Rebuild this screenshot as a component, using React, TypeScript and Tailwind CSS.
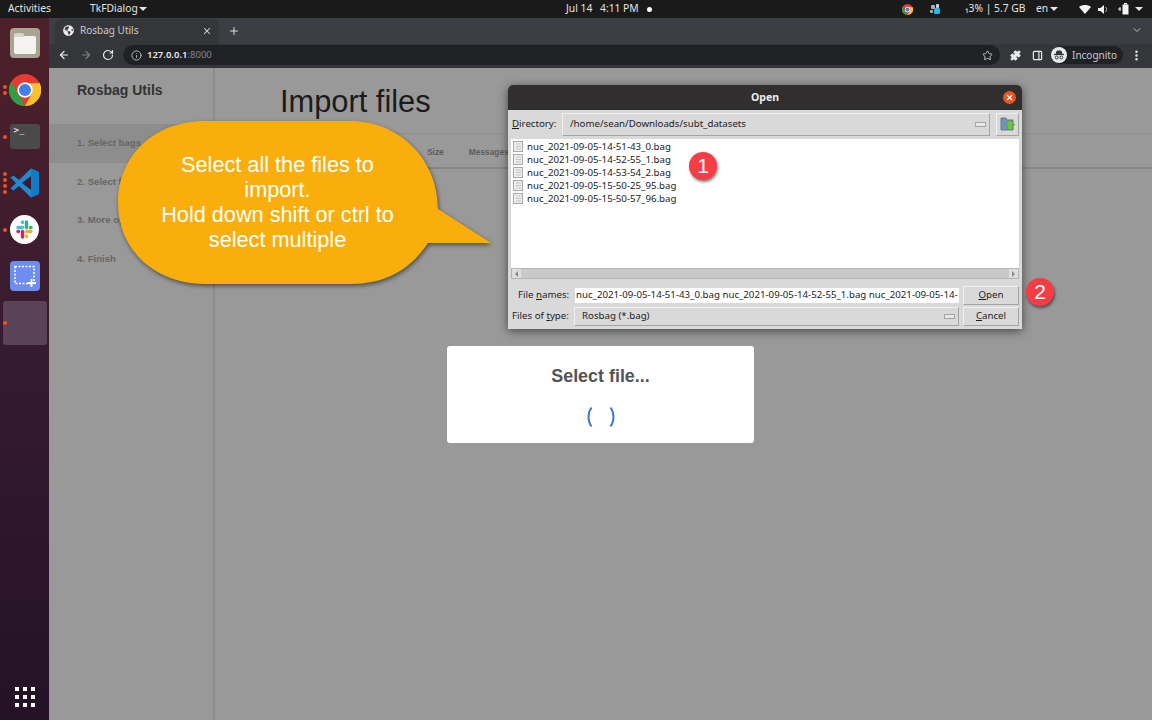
import React from 'react';
import {
  ArrowLeft,
  ArrowRight,
  ChevronDown,
  Info,
  MoreVertical,
  PanelRight,
  Plus,
  Puzzle,
  RotateCw,
  Star,
  X,
} from 'lucide-react';
import { FaGlobeAmericas } from 'react-icons/fa';

const files = [
  'nuc_2021-09-05-14-51-43_0.bag',
  'nuc_2021-09-05-14-52-55_1.bag',
  'nuc_2021-09-05-14-53-54_2.bag',
  'nuc_2021-09-05-15-50-25_95.bag',
  'nuc_2021-09-05-15-50-57_96.bag',
];

const steps = ['1. Select bags', '2. Select fields', '3. More options', '4. Finish'];

function Caret() {
  return <span className="inline-block h-0 w-0 border-x-[4px] border-t-[4px] border-x-transparent border-t-[#e6e6e6]" />;
}

function ChromeLogo({ size }: { size: number }) {
  return (
    <svg width={size} height={size} viewBox="0 0 48 48">
      <circle cx="24" cy="24" r="24" fill="#e53b30" />
      <path d="M24 48 A24 24 0 0 1 3.2 12 L14 30 Z" fill="#2f9e48" />
      <path d="M45 12 A24 24 0 0 1 24 48 L34 30 L24 14 H45 Z" fill="#fbc02d" />
      <circle cx="24" cy="24" r="11.5" fill="#fff" />
      <circle cx="24" cy="24" r="9" fill="#3f7fe8" />
    </svg>
  );
}

function VSCodeLogo() {
  return (
    <svg width="30" height="30" viewBox="0 0 30 30">
      <path d="M21 0.5 L29 4 V26 L21 29.5 L9 18 L3.5 22.5 L0.5 20.5 L6 15 L0.5 9.5 L3.5 7.5 L9 12 Z" fill="#1f8ad2" />
      <path d="M21 0.5 L29 4 V26 L21 29.5 Z" fill="#0f7cc4" />
      <path d="M21 8 L12 15 L21 22 Z" fill="#3d1a2e" />
    </svg>
  );
}

function SlackLogo() {
  return (
    <svg width="29" height="29" viewBox="0 0 29 29">
      <circle cx="14.5" cy="14.5" r="14.5" fill="#fff" />
      <g strokeWidth="3.4" strokeLinecap="round" fill="none">
        <path d="M12.5 12.5 H8" stroke="#36c5f0" />
        <path d="M12.5 7 V7.5" stroke="#36c5f0" />
        <path d="M16.5 7 V12.5" stroke="#2eb67d" />
        <path d="M21 12.5 H20.5" stroke="#2eb67d" />
        <path d="M16.5 16.5 H21" stroke="#ecb22e" />
        <path d="M16.5 21.5 V21" stroke="#ecb22e" />
        <path d="M12.5 16.5 V22" stroke="#e01e5a" />
        <path d="M8 16.5 H8.5" stroke="#e01e5a" />
      </g>
    </svg>
  );
}

function Dots({ count }: { count: number }) {
  return (
    <div className="absolute left-[3px] top-1/2 flex -translate-y-1/2 flex-col gap-[2px]">
      {Array.from({ length: count }).map((_, i) => (
        <span key={i} className="h-1 w-1 rounded-full bg-[#e9541f]" />
      ))}
    </div>
  );
}

function Dock() {
  return (
    <div className="relative flex w-[49px] shrink-0 flex-col items-center bg-gradient-to-b from-[#4e2029] via-[#351a30] to-[#241226] pt-[10px]">
      {/* Files */}
      <div className="flex h-[30px] w-[30px] items-center justify-center rounded-[4px] bg-[#a8a393]">
        <div className="relative mt-[3px] h-[18px] w-[22px] rounded-[2px] bg-[#f4f3ef]">
          <div className="absolute -top-[3px] left-0 h-[4px] w-[10px] rounded-t-[2px] bg-[#d8d5cb]" />
        </div>
      </div>
      {/* Chrome */}
      <div className="relative mt-[16px] flex h-[32px] w-full items-center justify-center">
        <Dots count={2} />
        <ChromeLogo size={32} />
      </div>
      {/* Terminal */}
      <div className="relative mt-[18px] flex h-[25px] w-full justify-center">
        <Dots count={1} />
        <div className="h-[25px] w-[30px] rounded-[3px] bg-[#4a4a4a] px-[4px] font-['DejaVu_Sans_Mono',monospace] text-[9px] leading-[12px] text-white">
          &gt;_
        </div>
      </div>
      {/* VS Code */}
      <div className="relative mt-[19px] flex h-[30px] w-full items-center justify-center">
        <Dots count={4} />
        <VSCodeLogo />
      </div>
      {/* Slack */}
      <div className="relative mt-[17px] flex h-[29px] w-full items-center justify-center">
        <Dots count={1} />
        <SlackLogo />
      </div>
      {/* Screenshot */}
      <div className="mt-[17px] flex h-[30px] w-[30px] items-center justify-center rounded-[4px] bg-[#6f8df0]">
        <svg width="24" height="24" viewBox="0 0 24 24" fill="none" stroke="#fff">
          <rect x="2" y="2.5" width="19" height="17" strokeWidth="1.6" strokeDasharray="2 1.5" />
          <path d="M18.5 15 V23 M14.5 19 H23" strokeWidth="1.8" />
        </svg>
      </div>
      {/* Active app */}
      <div className="relative mt-[10px] h-[44px] w-[44px] rounded-[3px] bg-[#5a4257]">
        <span className="absolute left-0 top-[20px] h-1 w-1 rounded-full bg-[#e9541f]" />
      </div>
      {/* App grid */}
      <div className="mt-auto mb-[13px] grid grid-cols-3 gap-[4px]">
        {Array.from({ length: 9 }).map((_, i) => (
          <span key={i} className="h-[4px] w-[4px] bg-white" />
        ))}
      </div>
    </div>
  );
}

function TopBar() {
  return (
    <div className="flex h-[18px] shrink-0 items-center whitespace-nowrap bg-[#1a1a1a] font-['Noto_Sans',sans-serif] text-[10.3px] text-[#e4e4e4]">
      <span className="ml-[8px] w-[43px]">Activities</span>
      <span className="ml-[39px] w-[45px]">TkFDialog</span>
      <span className="ml-[4px] flex w-[8px]"><Caret /></span>
      <span className="ml-[419px] w-[27px]">Jul 14</span>
      <span className="ml-[7px] w-[35px]">4:11 PM</span>
      <span className="ml-[12px] h-[5px] w-[5px] rounded-full bg-white" />
      <div className="ml-[250px] flex w-[11px]"><ChromeLogo size={11} /></div>
      <svg className="ml-[17px]" width="11" height="11" viewBox="0 0 11 11">
        <rect x="1" y="1" width="4" height="4" rx="1" fill="#9fb4b8" />
        <rect x="6" y="0" width="3" height="4" rx="1" fill="#c9d5d8" />
        <rect x="4" y="4" width="6" height="6" rx="1.5" fill="#2fb5e8" />
        <rect x="0" y="6" width="3" height="3" rx="1" fill="#9fb4b8" />
      </svg>
      <span className="ml-[24px] w-[55px]">₁3% | 5.7 GB</span>
      <span className="ml-[16px] w-[11px]">en</span>
      <span className="ml-[3px] flex w-[8px]"><Caret /></span>
      <svg className="ml-[21px]" width="12" height="9" viewBox="0 0 12 9">
        <path d="M0 2 C3.5 -0.6 8.5 -0.6 12 2 L6 9 Z" fill="#f2f2f2" />
      </svg>
      <svg className="ml-[7px]" width="11" height="11" viewBox="0 0 11 11">
        <path d="M0 4 H2.5 L6 1 V10 L2.5 7 H0 Z" fill="#f2f2f2" />
        <path d="M7.5 3 C9 4.5 9 6.5 7.5 8" stroke="#bbb" fill="none" />
      </svg>
      <svg className="ml-[9px]" width="11" height="12" viewBox="0 0 11 12">
        <rect x="4.5" y="1.5" width="6" height="10" rx="0.5" fill="#f2f2f2" />
        <rect x="6" y="0" width="3" height="1.5" fill="#f2f2f2" />
        <path d="M0 6 H3 M2 4 V8" stroke="#f2f2f2" />
      </svg>
      <span className="ml-[6px] flex w-[8px]"><Caret /></span>
    </div>
  );
}

function Browser() {
  return (
    <div className="flex h-[50px] shrink-0 flex-col font-['Noto_Sans',sans-serif]">
      {/* Tab strip */}
      <div className="flex h-[26px] items-end bg-[#3b3e42] pl-[6px] text-[#c8cacc]">
        <div className="flex h-[25px] w-[164px] items-center rounded-t-[7px] bg-[#35363a] pb-[2px] pl-[8px] pr-[7px] text-[10px]">
          <FaGlobeAmericas className="h-[11px] w-[11px] text-[#eeeeee]" />
          <span className="ml-[6px] flex-1">Rosbag Utils</span>
          <X className="h-[10px] w-[10px] text-[#dddddd]" strokeWidth={2.5} />
        </div>
        <Plus className="mb-[7px] ml-[9px] h-[12px] w-[12px] text-[#dddddd]" strokeWidth={2} />
        <ChevronDown className="mb-[8px] ml-auto mr-[9px] h-[12px] w-[12px] text-[#bcbcbc]" />
      </div>
      {/* Toolbar */}
      <div className="flex h-[24px] items-center bg-[#35363a] pb-[2px]">
        <ArrowLeft className="ml-[9px] h-[12px] w-[12px] text-[#e8eaed]" strokeWidth={2.4} />
        <ArrowRight className="ml-[10px] h-[12px] w-[12px] text-[#7c7e82]" strokeWidth={2.4} />
        <RotateCw className="ml-[10px] h-[12px] w-[12px] text-[#e8eaed]" strokeWidth={2.4} />
        <div className="ml-[9px] flex h-[20px] w-[877px] items-center rounded-full bg-[#202124] pl-[8px] pr-[7px] text-[9.5px]">
          <Info className="h-[11px] w-[11px] text-[#bcbec2]" />
          <span className="ml-[5px] font-semibold text-[#e8eaed]">127.0.0.1</span>
          <span className="text-[#84878b]">:8000</span>
          <Star className="ml-auto h-[11px] w-[11px] text-[#c4c7c5]" strokeWidth={2} />
        </div>
        <Puzzle className="ml-[10px] h-[11px] w-[11px] fill-[#e8eaed] text-[#e8eaed]" />
        <PanelRight className="ml-[11px] h-[11px] w-[11px] text-[#e8eaed]" strokeWidth={2.6} />
        <div className="ml-[8px] flex h-[18px] w-[72px] items-center rounded-full bg-[#202124] text-[10px] text-[#c8cacc]">
          <span className="flex h-[16px] w-[16px] items-center justify-center rounded-full bg-[#e8eaed]">
            <svg width="12" height="10" viewBox="0 0 12 10" fill="none" stroke="#35363a">
              <path d="M1 4.5 H11" strokeWidth="1.2" />
              <path d="M3 4 L4 1 H8 L9 4 Z" fill="#35363a" />
              <circle cx="3.7" cy="7.5" r="1.5" />
              <circle cx="8.3" cy="7.5" r="1.5" />
            </svg>
          </span>
          <span className="ml-[5px]">Incognito</span>
        </div>
        <MoreVertical className="ml-[7px] h-[13px] w-[13px] text-[#e8eaed]" strokeWidth={2.6} />
      </div>
    </div>
  );
}

function Page() {
  return (
    <div className="flex min-h-0 flex-1 bg-[#999999] font-['Liberation_Sans',sans-serif]">
      {/* Sidebar */}
      <div className="w-[166px] shrink-0 border-r-2 border-[#8c8c8c]">
        <div className="h-[56px] pl-[28px] pt-[12px] text-[14px] font-bold text-[#333333]">Rosbag Utils</div>
        {steps.map((step, i) => (
          <div
            key={step}
            className={`flex h-[38.5px] items-center pl-[28px] text-[9.6px] font-bold text-[#666666] ${i === 0 ? 'bg-[#8d8d8d]' : ''}`}
          >
            {step}
          </div>
        ))}
      </div>
      {/* Main */}
      <div className="min-w-0 flex-1">
        <div className="h-[66px] border-b border-[#8f8f8f] pl-[65px] pt-[14px] text-[30.8px] leading-[40px] text-[#1b1b1b]">Import files</div>
        <div className="flex h-[35px] items-center border-b-2 border-[#848484] pl-[212px] pt-[3px] text-[8.4px] font-bold text-[#5c5c5c]">
          <span>Size</span>
          <span className="ml-[25px]">Messages</span>
        </div>
      </div>
    </div>
  );
}

function Callout() {
  return (
    <div className="absolute left-[116px] top-[119px] h-[172px] w-[380px]">
      <svg width="380" height="172" viewBox="116 119 380 172" className="absolute inset-0 drop-shadow-[1px_2px_2px_rgba(0,0,0,0.5)]">
        <path
          d="M205 121 H350 C400 121 438 160 438 209 L491 243 H428 C410 270 385 284 350 284 H205 C155 284 118 250 118 203 C118 155 155 121 205 121 Z"
          fill="#f9ae0b"
        />
      </svg>
      <div className="absolute left-[34px] top-[33px] w-[255px] text-center font-['Liberation_Sans',sans-serif] text-[21.7px] leading-[25px] text-white">
        Select all the files to
        <br />
        import.
        <br />
        Hold down shift or ctrl to
        <br />
        select multiple
      </div>
    </div>
  );
}

function Badge({ label, className }: { label: string; className: string }) {
  return (
    <div
      className={`absolute flex h-[28px] w-[28px] items-center justify-center rounded-full bg-[#f63c45] font-['Liberation_Sans',sans-serif] text-[21px] text-white shadow-[1px_2px_3px_rgba(0,0,0,0.5)] ${className}`}
    >
      {label}
    </div>
  );
}

function TkRaised({ className, children }: { className: string; children?: React.ReactNode }) {
  return (
    <div className={`flex items-center border border-b-[#a4a4a4] border-l-[#efefef] border-r-[#a4a4a4] border-t-[#efefef] bg-[#d9d9d9] ${className}`}>
      {children}
    </div>
  );
}

function FileDialog() {
  return (
    <div className="absolute left-[508px] top-[85px] flex h-[244px] w-[514px] flex-col overflow-hidden rounded-t-[5px] bg-[#d9d9d9] font-['Noto_Sans',sans-serif] text-[9.7px] text-[#1c1c1c] shadow-[0_2px_10px_rgba(0,0,0,0.55)]">
      <div className="relative flex h-[25px] shrink-0 items-center justify-center bg-[#302e2e] pt-[1px] text-[10.5px] font-bold text-[#eeeeee]">
        Open
        <span className="absolute right-[6px] top-[6px] flex h-[13px] w-[13px] items-center justify-center rounded-full bg-[#e9541f]">
          <X className="h-[9px] w-[9px] text-white" strokeWidth={3} />
        </span>
      </div>
      {/* Directory row */}
      <div className="flex h-[28px] shrink-0 items-center pl-[4px] pr-[3px]">
        <span className="w-[50px]"><u>D</u>irectory:</span>
        <TkRaised className="h-[23px] w-[428px] pl-[7px] pr-[3px]">
          <span className="flex-1">/home/sean/Downloads/subt_datasets</span>
          <span className="h-[5px] w-[11px] border border-[#a4a4a4] bg-[#e9e9e9]" />
        </TkRaised>
        <TkRaised className="ml-auto h-[23px] w-[23px] justify-center">
          <svg width="16" height="14" viewBox="0 0 16 14">
            <path d="M1 1 H6 L7 3 H13 V13 H1 Z" fill="#6f93b8" stroke="#687a8a" />
            <path d="M10 3 L15 8 H12.5 V12.5 H7.5 V8 H5 Z" fill="#6fc144" stroke="#4f9a2e" strokeWidth="0.6" />
          </svg>
        </TkRaised>
      </div>
      {/* File list */}
      <div className="ml-[3px] mr-[3px] mt-[1px] h-[129px] shrink-0 bg-white pl-[2px] pt-[1px] leading-[13px]">
        {files.map((file) => (
          <div key={file} className="flex h-[13px] items-center">
            <svg width="10" height="11" viewBox="0 0 10 11">
              <rect x="0.5" y="0.5" width="9" height="10" fill="#ececec" stroke="#a9a9a9" />
              <path d="M3 3 H8 M3 5.5 H8 M3 8 H8" stroke="#c4c4c4" />
            </svg>
            <span className="ml-[4px]">{file}</span>
          </div>
        ))}
      </div>
      {/* Scrollbar */}
      <div className="mx-[3px] flex h-[11px] shrink-0 items-center justify-between border border-[#b5b5b5] bg-[#c9c9c9] text-[#777777]">
        <span className="flex h-full w-[9px] items-center justify-center bg-[#dedede]">
          <span className="h-0 w-0 border-y-[3px] border-r-[3px] border-y-transparent border-r-[#8a8a8a]" />
        </span>
        <span className="flex h-full w-[9px] items-center justify-center bg-[#dedede]">
          <span className="h-0 w-0 border-y-[3px] border-l-[3px] border-y-transparent border-l-[#8a8a8a]" />
        </span>
      </div>
      {/* File names */}
      <div className="mt-[7px] flex h-[19px] shrink-0 items-center pl-[10px] pr-[3px]">
        <span className="w-[57px]">File <u>n</u>ames:</span>
        <div className="flex h-[15px] w-[384px] items-center overflow-hidden whitespace-nowrap bg-white pl-[1px]">
          nuc_2021-09-05-14-51-43_0.bag nuc_2021-09-05-14-52-55_1.bag nuc_2021-09-05-14-
        </div>
        <TkRaised className="ml-auto h-[19px] w-[56px] justify-center"><span><u>O</u>pen</span></TkRaised>
      </div>
      {/* Files of type */}
      <div className="mt-[2px] flex h-[19px] shrink-0 items-center pl-[4px] pr-[3px]">
        <span className="w-[62px]">Files of <u>t</u>ype:</span>
        <TkRaised className="h-[19px] w-[385px] pl-[7px] pr-[3px]">
          <span className="flex-1">Rosbag (*.bag)</span>
          <span className="h-[5px] w-[11px] border border-[#a4a4a4] bg-[#e9e9e9]" />
        </TkRaised>
        <TkRaised className="ml-auto h-[19px] w-[56px] justify-center"><span><u>C</u>ancel</span></TkRaised>
      </div>
    </div>
  );
}

function SelectFileModal() {
  return (
    <div className="absolute left-[447px] top-[346px] flex h-[97px] w-[307px] flex-col items-center rounded-[3px] bg-white pt-[20px] font-['Liberation_Sans',sans-serif]">
      <div className="text-[17.9px] font-bold leading-[21px] text-[#545454]">Select file...</div>
      <svg className="mt-[19px]" width="30" height="22" viewBox="0 0 30 22" fill="none" stroke="#3f7cc9" strokeWidth="2">
        <path d="M5.5 1.5 C1.5 7 1.5 15 5.5 20.5" />
        <path d="M24.5 1.5 C28.5 7 28.5 15 24.5 20.5" />
      </svg>
    </div>
  );
}

export default function App() {
  return (
    <div className="relative flex h-[720px] w-[1152px] flex-col overflow-hidden">
      <TopBar />
      <div className="flex min-h-0 flex-1">
        <Dock />
        <div className="flex min-w-0 flex-1 flex-col">
          <Browser />
          <Page />
        </div>
      </div>
      <Callout />
      <FileDialog />
      <SelectFileModal />
      <Badge label="1" className="left-[689px] top-[152px]" />
      <Badge label="2" className="left-[1026px] top-[278px]" />
    </div>
  );
}
